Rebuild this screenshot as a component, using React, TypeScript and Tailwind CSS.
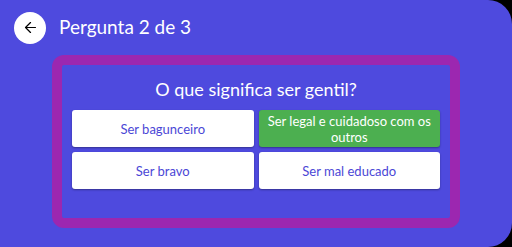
import { ArrowLeft } from "lucide-react";

const FONT = { fontFamily: "Lato, 'Open Sans', sans-serif" };

interface Option {
  label: string;
  correct?: boolean;
}

const OPTIONS: Option[] = [
  { label: "Ser bagunceiro" },
  { label: "Ser legal e cuidadoso com os outros", correct: true },
  { label: "Ser bravo" },
  { label: "Ser mal educado" },
];

function OptionButton({ option }: { option: Option }) {
  return (
    <button
      type="button"
      className={`flex h-[37px] items-center justify-center rounded-[3px] px-[6px] text-center text-[13px] leading-[16px] shadow-[0_1px_2px_rgba(0,0,0,0.35)] ${
        option.correct ? "bg-[#4caf50] text-white" : "bg-white text-[#4b47d6]"
      }`}
    >
      {option.label}
    </button>
  );
}

export default function App() {
  return (
    <div className="h-[247px] w-[512px] bg-black" style={FONT}>
      <div className="flex h-full w-full flex-col rounded-r-[24px] bg-[#4e4ade]">
        <header className="flex h-[55px] items-center gap-[13px] pl-[14px]">
          <button
            type="button"
            aria-label="Voltar"
            className="flex h-[32px] w-[32px] items-center justify-center rounded-full bg-white text-black"
          >
            <ArrowLeft size={17} strokeWidth={1.75} />
          </button>
          <h1 className="text-[19px] font-normal text-white">Pergunta 2 de 3</h1>
        </header>

        <div className="ml-[52px] w-[408px] rounded-[12px] border-[10px] border-[#9c27b0] px-[10px] pb-[29px] pt-[13px]">
          <h2 className="mb-[10px] text-center text-[18px] leading-[22px] text-white">
            O que significa ser gentil?
          </h2>
          <div className="grid grid-cols-2 gap-x-[5px] gap-y-[5px]">
            {OPTIONS.map((o) => (
              <OptionButton key={o.label} option={o} />
            ))}
          </div>
        </div>
      </div>
    </div>
  );
}
